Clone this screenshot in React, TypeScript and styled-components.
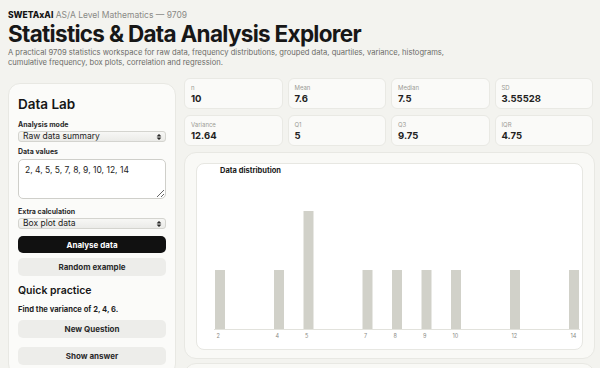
import * as React from "react";
import styled, { createGlobalStyle } from "styled-components";

const GlobalStyle = createGlobalStyle`
	* { box-sizing: border-box; }
	html, body {
		margin: 0;
		background: #f3f3ef;
		font-family: Inter, "Noto Sans", sans-serif;
		color: #161616;
	}
`;

const stats = [
	{ label: "n", value: "10" },
	{ label: "Mean", value: "7.6" },
	{ label: "Median", value: "7.5" },
	{ label: "SD", value: "3.55528" },
	{ label: "Variance", value: "12.64" },
	{ label: "Q1", value: "5" },
	{ label: "Q3", value: "9.75" },
	{ label: "IQR", value: "4.75" },
];

const counts: [number, number][] = [
	[2, 1],
	[4, 1],
	[5, 2],
	[7, 1],
	[8, 1],
	[9, 1],
	[10, 1],
	[12, 1],
	[14, 1],
];

export default function App(): JSX.Element {
	return (
		<Page>
			<GlobalStyle />
			<Header>
				<Brand>
					<b>SWETAxAI</b> AS/A Level Mathematics — 9709
				</Brand>
				<Title>Statistics &amp; Data Analysis Explorer</Title>
				<Subtitle>
					A practical 9709 statistics workspace for raw data, frequency distributions, grouped data, quartiles,
					variance, histograms, cumulative frequency, box plots, correlation and regression.
				</Subtitle>
			</Header>

			<Main>
				<Panel>
					<PanelTitle>Data Lab</PanelTitle>
					<Label $top={6.5}>Analysis mode</Label>
					<SelectBox>
						<Select defaultValue="raw">
							<option value="raw">Raw data summary</option>
						</Select>
						<Arrows />
					</SelectBox>
					<Label $top={4.5} $bottom={3.5}>Data values</Label>
					<TextArea defaultValue="2, 4, 5, 5, 7, 8, 9, 10, 12, 14" />
					<Label $top={7.5}>Extra calculation</Label>
					<SelectBox>
						<Select defaultValue="box">
							<option value="box">Box plot data</option>
						</Select>
						<Arrows />
					</SelectBox>
					<Button $primary $top={7} $height={17}>Analyse data</Button>
					<Button $top={5}>Random example</Button>
					<SectionTitle>Quick practice</SectionTitle>
					<Question>Find the variance of 2, 4, 6.</Question>
					<Button $top={5}>New Question</Button>
					<Button $top={9}>Show answer</Button>
				</Panel>

				<Results>
					<StatGrid>
						{stats.map((s) => (
							<StatCard key={s.label}>
								<StatLabel>{s.label}</StatLabel>
								<StatValue>{s.value}</StatValue>
							</StatCard>
						))}
					</StatGrid>
					<ChartCard>
						<ChartBox>
							<Chart />
						</ChartBox>
					</ChartCard>
					<ChartCard />
				</Results>
			</Main>
		</Page>
	);
}

function Arrows(): JSX.Element {
	return (
		<ArrowIcon width="6" height="8" viewBox="0 0 6 8">
			<path d="M1.2 3.2 L3 1.2 L4.8 3.2 Z M1.2 4.8 L3 6.8 L4.8 4.8 Z" fill="#222" stroke="#222" strokeWidth="0.5" strokeLinejoin="round" />
		</ArrowIcon>
	);
}

function Chart(): JSX.Element {
	const x = (v: number) => 18 + (v - 2) * 29.5;
	const base = 165;
	const unit = 59;
	return (
		<svg width="385" height="185" viewBox="0 0 385 185">
			<text x="23" y="9" fontSize="7.5" fontWeight="700" fill="#1a1a1a" fontFamily="Inter, sans-serif">
				Data distribution
			</text>
			<line x1="17" y1={base + 0.5} x2="383" y2={base + 0.5} stroke="#e2e2dc" strokeWidth="1" />
			{counts.map(([v, c]) => (
				<g key={v}>
					<rect x={x(v)} y={base - c * unit} width="10" height={c * unit} fill="#d1d1c9" />
					<text x={x(v) + 1.5} y={base + 8.5} fontSize="5.5" fill="#8a8a84" fontFamily="Inter, sans-serif">
						{v}
					</text>
				</g>
			))}
		</svg>
	);
}

const Page = styled.div`
	padding: 8px;
`;

const Header = styled.header`
	display: flex;
	flex-direction: column;
`;

const Brand = styled.div`
	font-size: 8.5px;
	line-height: 12px;
	color: #8a8a86;
	padding-top: 1px;

	b {
		color: #141414;
		font-weight: 800;
	}
`;

const Title = styled.h1`
	margin: 0;
	font-size: 22.5px;
	line-height: 26px;
	font-weight: 700;
	letter-spacing: -0.7px;
	color: #171717;
`;

const Subtitle = styled.p`
	margin: 1px 0 0;
	max-width: 450px;
	font-size: 7.6px;
	line-height: 10px;
	color: #6c6c68;
`;

const Main = styled.div`
	display: grid;
	grid-template-columns: 168px 1fr;
	gap: 8px;
	margin-top: 10px;
	align-items: start;
`;

const Panel = styled.aside`
	margin-top: 5px;
	display: flex;
	flex-direction: column;
	padding: 12px 9px 10px;
	background: #fbfbf9;
	border: 1px solid #e8e8e3;
	border-radius: 12px;
`;

const PanelTitle = styled.h2`
	margin: 0;
	font-size: 13.5px;
	line-height: 17px;
	font-weight: 600;
`;

const Label = styled.label<{ $top?: number; $bottom?: number }>`
	display: block;
	margin: ${(p) => p.$top ?? 0}px 0 ${(p) => p.$bottom ?? 2.5}px;
	font-size: 7px;
	line-height: 9px;
	font-weight: 700;
	color: #2a2a2a;
`;

const SelectBox = styled.div`
	position: relative;
	height: 11px;
`;

const Select = styled.select`
	display: block;
	width: 100%;
	height: 11px;
	padding: 0 14px 0 4px;
	appearance: none;
	font-family: Inter, sans-serif;
	font-size: 8.5px;
	line-height: 9px;
	color: #1c1c1c;
	background: linear-gradient(#f7f7f5, #ebebe8);
	border: 1px solid #d4d4cf;
	border-radius: 3px;
	outline: none;
`;

const ArrowIcon = styled.svg`
	position: absolute;
	right: 4px;
	top: 1.5px;
	pointer-events: none;
`;

const TextArea = styled.textarea`
	display: block;
	width: 100%;
	height: 40px;
	padding: 5px 6px;
	font-family: Inter, sans-serif;
	font-size: 8.5px;
	line-height: 11px;
	color: #1c1c1c;
	background: #ffffff;
	border: 1px solid #cfcfca;
	border-radius: 5px;
	resize: vertical;
	outline: none;
`;

const Button = styled.button<{ $primary?: boolean; $top?: number; $height?: number }>`
	display: block;
	margin-top: ${(p) => p.$top ?? 0}px;
	height: ${(p) => p.$height ?? 18}px;
	width: 100%;
	padding: 0;
	font-family: Inter, sans-serif;
	font-size: 8px;
	font-weight: 700;
	color: ${(p) => (p.$primary ? "#ffffff" : "#2a2a2a")};
	background: ${(p) => (p.$primary ? "#111111" : "#ededea")};
	border: none;
	border-radius: 5px;
`;

const SectionTitle = styled.h3`
	margin: 8px 0 0;
	font-size: 10.5px;
	line-height: 14px;
	font-weight: 600;
`;

const Question = styled.p`
	margin: 7px 0 0;
	font-size: 7.6px;
	line-height: 10px;
	font-weight: 700;
	color: #1f1f1f;
`;

const Results = styled.section`
	display: flex;
	flex-direction: column;
	gap: 4px;
`;

const StatGrid = styled.div`
	display: grid;
	grid-template-columns: repeat(4, 1fr);
	gap: 6px 5px;
	padding-right: 2px;
	margin-bottom: 2px;
`;

const StatCard = styled.div`
	height: 31px;
	padding: 5px 6px;
	background: #fafaf8;
	border: 1px solid #e9e9e4;
	border-radius: 6px;
`;

const StatLabel = styled.div`
	font-size: 6px;
	line-height: 8px;
	color: #9a9a95;
`;

const StatValue = styled.div`
	margin-top: 1px;
	font-size: 9.5px;
	line-height: 12px;
	font-weight: 700;
	color: #222;
`;

const ChartCard = styled.div`
	min-height: 30px;
	padding: 10px 11px 8px;
	background: #f9f9f6;
	border: 1px solid #e8e8e3;
	border-radius: 12px;
`;

const ChartBox = styled.div`
	height: 187px;
	background: #ffffff;
	border: 1px solid #e7e7e2;
	border-radius: 8px;
	overflow: hidden;
`;
